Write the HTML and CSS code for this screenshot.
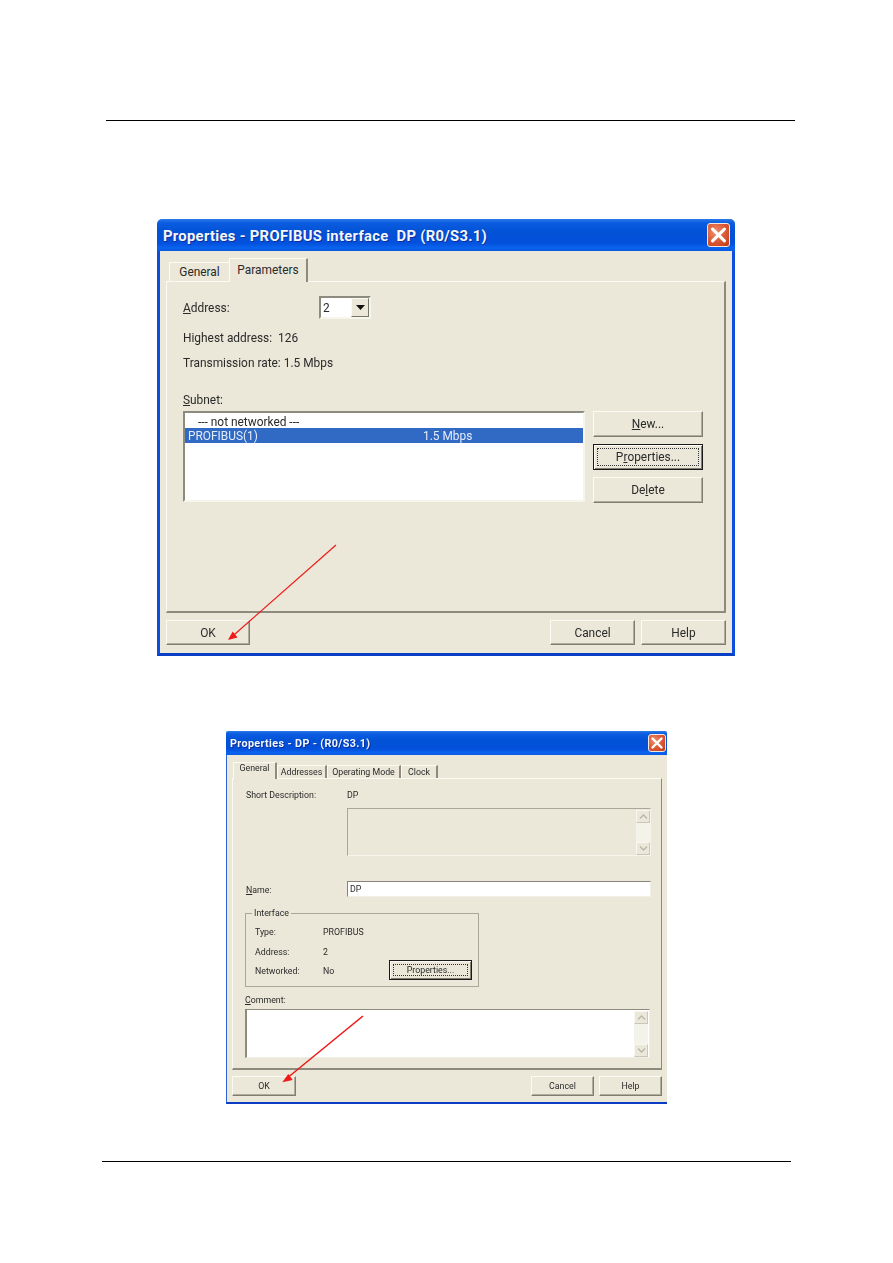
FILE: index.html
```html
<!DOCTYPE html>
<html lang="en">
<head>
<meta charset="utf-8">
<title>Properties</title>
<link rel="stylesheet" href="styles.css">
</head>
<body>
<main class="page">
  <hr class="rule rule-top">

  <section class="dialog dialog-lg">
    <header class="titlebar">
      <h2 class="title">Properties - PROFIBUS interface&nbsp; DP (R0/S3.1)</h2>
      <span class="close"><svg viewBox="0 0 16 16" class="close-x"><path d="M3.5 3.5l9 9M12.5 3.5l-9 9"/></svg></span>
    </header>
    <div class="client">
      <nav class="tabs">
        <span class="tab tab-general">General</span>
        <span class="tab tab-active tab-params">Parameters</span>
      </nav>
      <div class="panel">
        <div class="row row-address">
          <span class="label-address"><u>A</u>ddress:</span>
          <span class="select">
            <span class="select-value">2</span>
            <span class="select-btn"><svg viewBox="0 0 9 5" class="select-arrow"><path d="M0 0h9L4.500 5z"/></svg></span>
          </span>
        </div>
        <div class="row row-high">Highest address:&nbsp; 126</div>
        <div class="row row-rate">Transmission rate: 1.5 Mbps</div>
        <div class="row row-subnet"><span><u>S</u>ubnet:</span></div>
        <div class="subnet">
          <div class="listbox">
            <div class="item item-plain">--- not networked ---</div>
            <div class="item item-selected"><span class="item-name">PROFIBUS(1)</span><span>1.5 Mbps</span></div>
          </div>
          <div class="side-buttons">
            <button class="btn btn-side" type="button"><u>N</u>ew...</button>
            <button class="btn btn-side btn-focus" type="button"><span class="focus-ring">P<u>r</u>operties...</span></button>
            <button class="btn btn-side" type="button">De<u>l</u>ete</button>
          </div>
        </div>
      </div>
      <footer class="footer">
        <button class="btn btn-ok" type="button">OK</button>
        <div class="footer-right">
          <button class="btn btn-foot" type="button">Cancel</button>
          <button class="btn btn-foot" type="button">Help</button>
        </div>
      </footer>
    </div>
  </section>

  <section class="dialog dialog-sm">
    <header class="titlebar titlebar-sm">
      <h2 class="title title-sm">Properties - DP - (R0/S3.1)</h2>
      <span class="close close-sm"><svg viewBox="0 0 16 16" class="close-x"><path d="M3.500 3.500l9 9M12.500 3.500l-9 9"/></svg></span>
    </header>
    <div class="client client-sm">
      <nav class="tabs tabs-sm">
        <span class="tab tab-active t-general">General</span>
        <span class="tab t-addresses">Addresses</span>
        <span class="tab t-mode">Operating Mode</span>
        <span class="tab t-clock">Clock</span>
      </nav>
      <div class="panel panel-sm">
        <div class="line line-desc"><span class="line-label">Short Description:</span><span>DP</span></div>
        <div class="desc-box">
          <div class="scroll">
            <span class="scroll-btn"><svg viewBox="0 0 9 5" class="chev"><path d="M1 4.500l3.500-3.500 3.500 3.500"/></svg></span>
            <span class="scroll-btn"><svg viewBox="0 0 9 5" class="chev"><path d="M1 .5l3.500 3.500 3.500-3.500"/></svg></span>
          </div>
        </div>
        <div class="line line-name">
          <span class="line-label"><u>N</u>ame:</span>
          <span class="name-input">DP</span>
        </div>
        <div class="group">
          <span class="legend">Interface</span>
          <div class="group-row"><span class="group-label">Type:</span><span>PROFIBUS</span></div>
          <div class="group-row"><span class="group-label">Address:</span><span>2</span></div>
          <div class="group-row">
            <span class="group-label">Networked:</span><span>No</span>
            <button class="btn btn-focus btn-group" type="button"><span class="focus-ring">Properties...</span></button>
          </div>
        </div>
        <div class="line line-comment"><span><u>C</u>omment:</span></div>
        <div class="comment-box">
          <div class="scroll scroll-comment">
            <span class="scroll-btn"><svg viewBox="0 0 9 5" class="chev"><path d="M1 4.500l3.500-3.500 3.500 3.500"/></svg></span>
            <span class="scroll-btn"><svg viewBox="0 0 9 5" class="chev"><path d="M1 .5l3.500 3.500 3.500-3.500"/></svg></span>
          </div>
        </div>
      </div>
      <footer class="footer footer-sm">
        <button class="btn btn-ok-sm" type="button">OK</button>
        <div class="footer-right footer-right-sm">
          <button class="btn btn-foot-sm" type="button">Cancel</button>
          <button class="btn btn-foot-sm" type="button">Help</button>
        </div>
      </footer>
    </div>
  </section>

  <hr class="rule rule-bottom">

  <svg class="arrows" viewBox="0 0 893 1263" aria-hidden="true">
    <line class="arrow-line" x1="336" y1="545" x2="231" y2="637.500"/>
    <polygon class="arrow-head" points="228,640 237.500,637.500 232.700,631.500"/>
    <line class="arrow-line arrow-line-sm" x1="363" y1="1016" x2="286" y2="1079"/>
    <polygon class="arrow-head" points="282.300,1082.300 292.700,1080 288.300,1074"/>
  </svg>
</main>
</body>
</html>
```
FILE: styles.css
```css
* { box-sizing: border-box; }
html, body { margin: 0; padding: 0; background: #fff; }
.page {
  position: relative;
  width: 893px;
  height: 1263px;
  overflow: hidden;
  padding-top: 120px;
  font-family: Roboto, "Liberation Sans", Arial, sans-serif;
  color: #2a2a2a;
}
.rule { border: 0; height: 1px; background: #000; margin: 0; }
.rule-top { width: 689px; margin-left: 106px; }
.rule-bottom { width: 689px; margin-left: 102px; margin-top: 57px; }

/* Dialog shells */
.dialog { display: flex; flex-direction: column; background: #ebe8d9; font-size: 11.900px; filter: blur(.3px); }
.dialog-lg {
  width: 578px; height: 437px; margin-left: 157px; margin-top: 98px;
  border-radius: 5px 5px 0 0;
}
.dialog-sm {
  width: 441px; height: 373px; margin-left: 226px; margin-top: 75px;
  font-size: 8.800px;
}
.titlebar {
  height: 32px;
  display: flex; align-items: center; justify-content: space-between;
  padding: 0 5px 0 6px;
  border-radius: 5px 5px 0 0;
  background: linear-gradient(#2a7ae8 0, #0b5ce0 12%, #0252d6 40%, #0350dc 75%, #0a63ee 90%, #0a5ae0 100%);
}
.titlebar-sm { height: 24px; padding: 0 1px 0 4px; border-radius: 2px 2px 0 0; }
.title {
  margin: 2px 0 0; color: #f4f7fd; font-size: 14.800px; font-weight: 700; letter-spacing: .3px;
  white-space: pre; text-shadow: 1px 1px 0 #0b2f9a;
}
.title-sm { margin-top: 0; font-size: 10.800px; letter-spacing: .35px; }
.close {
  width: 23px; height: 24px; display: flex; align-items: center; justify-content: center;
  border: 1px solid #f3e8e0; border-radius: 3px;
  background: radial-gradient(circle at 35% 35%, #ef8f70 0, #dc5a35 50%, #bf3a18 100%);
}
.close-sm { width: 18px; height: 18px; }
.close-x { width: 100%; height: 100%; }
.close-x path { fill: none; stroke: #fff; stroke-width: 2.400; stroke-linecap: round; }
.client {
  flex: 1; display: flex; flex-direction: column;
  padding: 7px 6px 3px;
  border: 3px solid #0d4fdc; border-top: 0; border-bottom-color: #0a3ec4;
}
.client-sm {
  padding: 7px 5px 0 5px;
  border-width: 0 0 2px 1px; border-left-color: #2a62d8; border-bottom-color: #0b3cc4;
}

/* Tabs */
.tabs { display: flex; align-items: flex-end; height: 23px; padding-left: 3px; position: relative; z-index: 1; }
.tabs-sm { height: 16px; padding-left: 1px; }
.tab {
  display: flex; align-items: center; justify-content: center;
  border-top: 1px solid #fbfaf3; border-left: 1px solid #fbfaf3;
  border-right: 2px solid #8d8b7d;
  background: #ebe8d9;
}
.tab-general { width: 60px; height: 19px; border-right: 0; }
.tab-params { width: 79px; }
.tab-active { height: 24px; margin-bottom: -1px; border-radius: 1px 1px 0 0; align-items: flex-start; padding-top: 4px; }
.t-general { width: 44px; height: 17px; padding-top: 0; }
.t-addresses { width: 50px; height: 13px; }
.t-mode { width: 74px; height: 13px; }
.t-clock { width: 37px; height: 13px; }
.panel {
  height: 332px; padding: 14px 0 0 16px;
  border-top: 1px solid #fbfaf3; border-left: 1px solid #fbfaf3;
  border-right: 2px solid #8d8b7d; border-bottom: 2px solid #8d8b7d;
}
.panel-sm { height: 292px; padding: 7px 0 0 12px; border-right-width: 1px; }

/* Large dialog content */
.row { display: flex; align-items: center; height: 20px; }
.row-address { height: 23px; }
.label-address { width: 136px; }
.row-high { margin-top: 9px; }
.row-rate { margin-top: 5px; }
.row-subnet { margin-top: 17px; }
.select {
  width: 52px; height: 23px; display: flex; justify-content: space-between; align-items: center;
  background: #fff; padding: 0 0 0 2px;
  border: 2px solid; border-color: #8d8b7d #f6f5ec #f6f5ec #8d8b7d;
}
.select-btn {
  width: 18px; height: 19px; display: flex; align-items: center; justify-content: center;
  background: #ebe8d9; border: 1px solid; border-color: #fbfaf3 #77756a #77756a #fbfaf3;
}
.select-arrow { width: 9px; height: 5px; fill: #111; }
.subnet { display: flex; gap: 8px; margin-top: 1px; }
.listbox {
  width: 402px; height: 91px; background: #fff; padding-top: 0;
  border: 2px solid; border-color: #8d8b7d #f6f5ec #f6f5ec #8d8b7d;
}
.item { height: 15px; display: flex; align-items: center; white-space: pre; }
.item-plain { padding-top: 2px; padding-left: 13px; }
.item-selected { padding-top: 1px; background: #316ac5; color: #e4ecf8; padding-left: 3px; }
.item-name { width: 235px; }
.side-buttons { display: flex; flex-direction: column; gap: 7px; }
.btn {
  display: flex; align-items: center; justify-content: center;
  padding: 0; margin: 0; font: inherit; color: inherit;
  background: #ebe8d9;
  border: 1px solid; border-color: #fbfaf3 #7f7d70 #7f7d70 #fbfaf3;
  box-shadow: inset -1px -1px 0 #aeac9d;
}
.btn-side { width: 110px; height: 26px; }
.btn-focus { border-color: #1a1a1a; box-shadow: inset 1px 1px 0 #fbfaf3, inset -1px -1px 0 #7f7d70; }
.focus-ring {
  display: flex; align-items: center; justify-content: center;
  width: calc(100% - 6px); height: calc(100% - 6px);
  border: 1px dotted #333;
}
.footer { display: flex; justify-content: space-between; margin-top: 7px; }
.btn-ok { width: 84px; height: 25px; }
.footer-right { display: flex; gap: 6px; }
.btn-foot { width: 85px; height: 25px; }

/* Small dialog content */
.line { display: flex; align-items: center; height: 16px; }
.line-label { width: 102px; padding-left: 1px; padding-top: 2px; }
.line-desc span, .line-comment span, .group-row > span { padding-top: 2px; }
.line-desc { margin-top: 0; }
.desc-box {
  margin: 6px 0 0 102px; width: 304px; height: 48px;
  display: flex; justify-content: flex-end; padding: 1px 0 0;
  border: 1px solid; border-color: #a9a797 #f6f5ec #f6f5ec #a9a797;
}
.scroll {
  width: 14px; display: flex; flex-direction: column; justify-content: space-between;
  background: #f4f3ea; margin-bottom: 0;
}
.scroll-btn {
  height: 13px; display: flex; align-items: center; justify-content: center;
  background: #ebe8d9; border: 1px solid; border-color: #f9f8f0 #c9c7b8 #c9c7b8 #f9f8f0;
}
.chev { width: 9px; height: 5px; fill: none; stroke: #b8b6a8; stroke-width: 1.300; }
.line-name { margin-top: 25px; }
.name-input {
  width: 304px; height: 16px; background: #fff; display: flex; align-items: center; padding-left: 2px;
  border: 1px solid; border-color: #85837a #f0efe6 #f0efe6 #85837a;
}
.group {
  position: relative; width: 234px; height: 74px; margin-top: 16px;
  padding: 9px 6px 0 9px;
  border: 1px solid #a9a797;
  display: flex; flex-direction: column; gap: 3.500px;
}
.legend { position: absolute; left: 6px; top: -7px; padding: 0 2px; background: #ebe8d9; line-height: 12px; }
.group-row { display: flex; align-items: center; height: 16px; }
.group-label { width: 68px; }
.btn-group { width: 83px; height: 20px; margin-left: auto; flex: none; }
.line-comment { margin-top: 4px; }
.comment-box {
  width: 405px; height: 49px; margin-top: 2px; background: #fff;
  display: flex; justify-content: flex-end; padding: 1px 1px 0 0;
  border: 1px solid; border-color: #8d8b7d #f0efe6 #f0efe6 #8d8b7d; border-left-width: 2px;
}
.footer-sm { margin-top: 6px; }
.btn-ok-sm { width: 64px; height: 20px; }
.footer-right-sm { gap: 5px; }
.btn-foot-sm { width: 63px; height: 20px; }

/* Red arrows drawn over the screenshots */
.arrows { position: absolute; left: 0; top: 0; width: 893px; height: 1263px; pointer-events: none; }
.arrow-line { stroke: #f01818; stroke-width: 1.200; }
.arrow-line-sm { stroke-width: 1.500; }
.arrow-head { fill: #f01818; }
```
